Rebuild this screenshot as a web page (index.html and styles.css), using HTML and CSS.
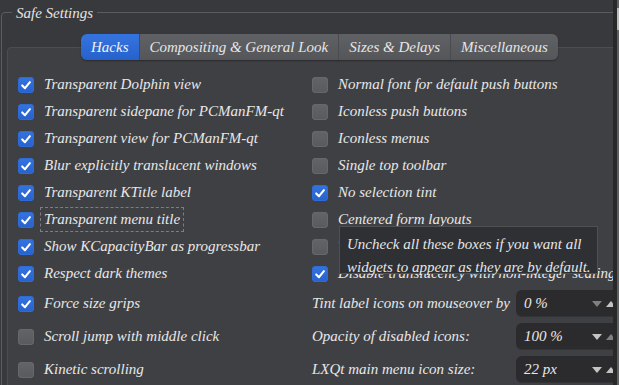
FILE: index.html
```html
<!DOCTYPE html>
<html>
<head>
<meta charset="utf-8">
<link rel="stylesheet" href="styles.css">
</head>
<body>
<div class="screen">
  <div class="window">
    <fieldset class="group">
      <legend>Safe Settings</legend>
      <div class="pane">
        <div class="tabs">
          <span class="tab active">Hacks</span>
          <span class="tab">Compositing &amp; General Look</span>
          <span class="tab">Sizes &amp; Delays</span>
          <span class="tab last">Miscellaneous</span>
        </div>
        <div class="checks">
          <div class="opt"><span class="box on"><svg viewBox="0 0 16 16"><path d="M4.2 8.4 L7 11.2 L11.9 5.2"/></svg></span><span>Transparent Dolphin view</span></div>
          <div class="opt"><span class="box"></span><span>Normal font for default push buttons</span></div>
          <div class="opt"><span class="box on"><svg viewBox="0 0 16 16"><path d="M4.2 8.4 L7 11.2 L11.9 5.2"/></svg></span><span>Transparent sidepane for PCManFM-qt</span></div>
          <div class="opt"><span class="box"></span><span>Iconless push buttons</span></div>
          <div class="opt"><span class="box on"><svg viewBox="0 0 16 16"><path d="M4.2 8.4 L7 11.2 L11.9 5.2"/></svg></span><span>Transparent view for PCManFM-qt</span></div>
          <div class="opt"><span class="box"></span><span>Iconless menus</span></div>
          <div class="opt"><span class="box on"><svg viewBox="0 0 16 16"><path d="M4.2 8.4 L7 11.2 L11.9 5.2"/></svg></span><span>Blur explicitly translucent windows</span></div>
          <div class="opt"><span class="box"></span><span>Single top toolbar</span></div>
          <div class="opt"><span class="box on"><svg viewBox="0 0 16 16"><path d="M4.2 8.4 L7 11.2 L11.9 5.2"/></svg></span><span>Transparent KTitle label</span></div>
          <div class="opt"><span class="box on"><svg viewBox="0 0 16 16"><path d="M4.2 8.4 L7 11.2 L11.9 5.2"/></svg></span><span>No selection tint</span></div>
          <div class="opt"><span class="box on"><svg viewBox="0 0 16 16"><path d="M4.2 8.4 L7 11.2 L11.9 5.2"/></svg></span><span class="focus">Transparent menu title</span></div>
          <div class="opt"><span class="box"></span><span>Centered form layouts</span></div>
          <div class="opt"><span class="box on"><svg viewBox="0 0 16 16"><path d="M4.2 8.4 L7 11.2 L11.9 5.2"/></svg></span><span>Show KCapacityBar as progressbar</span></div>
          <div class="opt"><span class="box"></span><span>Transparent PCManFM-qt desktop</span></div>
          <div class="opt"><span class="box on"><svg viewBox="0 0 16 16"><path d="M4.2 8.4 L7 11.2 L11.9 5.2"/></svg></span><span>Respect dark themes</span></div>
          <div class="opt"><span class="box on"><svg viewBox="0 0 16 16"><path d="M4.2 8.4 L7 11.2 L11.9 5.2"/></svg></span><span>Disable translucency with non-integer scaling</span></div>
        </div>
        <div class="bottom">
          <div class="opt"><span class="box on"><svg viewBox="0 0 16 16"><path d="M4.2 8.4 L7 11.2 L11.9 5.2"/></svg></span><span>Force size grips</span></div>
          <div class="field"><span>Tint label icons on mouseover by</span><div class="spin"><span class="val">0 %</span><span class="arr down dim"></span><span class="arr up"></span></div></div>
          <div class="opt"><span class="box"></span><span>Scroll jump with middle click</span></div>
          <div class="field"><span>Opacity of disabled icons:</span><div class="spin"><span class="val">100 %</span><span class="arr down"></span><span class="arr up dim"></span></div></div>
          <div class="opt"><span class="box"></span><span>Kinetic scrolling</span></div>
          <div class="field"><span>LXQt main menu icon size:</span><div class="spin"><span class="val">22 px</span><span class="arr down"></span><span class="arr up"></span></div></div>
        </div>
      </div>
    </fieldset>
  </div>
  <div class="edge"></div>
  <div class="scroll"><div class="thumb"></div></div>
</div>
<div class="tooltip">Uncheck all these boxes if you want all<br>widgets to appear as they are by default.</div>
</body>
</html>
```

FILE: styles.css
```css
html, body {
  margin: 0;
  padding: 0;
  background: #38393d;
  width: 619px;
  height: 385px;
  overflow: hidden;
  font-family: "Liberation Serif", "Times New Roman", serif;
  font-style: italic;
  font-size: 15px;
  color: #e8e8e8;
}

.screen {
  display: flex;
  height: 385px;
}

.window {
  width: 613px;
  height: 385px;
  overflow: hidden;
  flex: none;
}

.edge {
  width: 4px;
  background: #29292a;
  flex: none;
}

.scroll {
  width: 2px;
  background: #5f6063;
  flex: none;
  padding-top: 8px;
}

.thumb {
  height: 22px;
  background: #b9babc;
}

.group {
  margin: 0 0 0 1px;
  padding: 0;
  width: 700px;
  height: 420px;
  border: 1px solid #5b5c60;
  border-radius: 4px;
  box-sizing: border-box;
}

.group legend {
  margin-left: 10px;
  padding: 0 4px;
  font-size: 15px;
  line-height: 22px;
  padding-top: 2px;
  color: #e4e4e4;
}

.pane {
  margin: 23px 0 0 5px;
  border: 1px solid #4c4d51;
  border-radius: 4px;
  background: #3f4044;
  height: 400px;
}

.tabs {
  display: flex;
  margin: -14px 0 0 73px;
  height: 26px;
  width: max-content;
  border-radius: 6px;
  box-shadow: 0 1px 2px rgba(0,0,0,0.35);
}

.tab {
  display: flex;
  align-items: center;
  padding: 0 10px;
  background: linear-gradient(#606164, #55565a);
  border-left: 1px solid #4a4b4e;
  color: #e6e6e6;
  font-size: 15px;
}

.tab.active {
  background: linear-gradient(#3574e0, #2661cb);
  border-left: none;
  border-radius: 6px 0 0 6px;
  color: #f2f2f2;
}

.tab.last {
  border-radius: 0 6px 6px 0;
}

.checks {
  display: grid;
  grid-template-columns: 294px 1fr;
  grid-auto-rows: 27px;
  margin: 11px 0 0 10px;
}

.opt {
  display: flex;
  align-items: center;
  white-space: nowrap;
}

.box {
  width: 16px;
  height: 16px;
  border-radius: 4px;
  background: linear-gradient(#636467, #595a5d);
  box-shadow: inset 0 0 0 1px #67686b;
  margin-right: 10px;
  flex: none;
  display: flex;
}

.box.on {
  background: linear-gradient(#3574e0, #2761cc);
  box-shadow: inset 0 0 0 1px #2f6bd6;
}

.box svg {
  width: 16px;
  height: 16px;
}

.box path {
  fill: none;
  stroke: #ffffff;
  stroke-width: 2.1;
  stroke-linecap: round;
  stroke-linejoin: round;
}

.focus {
  outline: 1px dashed #7d7e82;
  outline-offset: 3px;
}

.bottom {
  display: grid;
  grid-template-columns: 294px 1fr;
  grid-auto-rows: 27px;
  row-gap: 6px;
  margin: 3px 0 0 10px;
}

.field {
  display: grid;
  grid-template-columns: 204px 110px;
  align-items: center;
  white-space: nowrap;
}

.spin {
  height: 27px;
  background: #2b2b2e;
  border-radius: 6px;
  display: flex;
  align-items: center;
  padding-left: 8px;
  box-shadow: inset 0 -1px 0 #333438;
}

.val {
  width: 68px;
}

.arr {
  width: 0;
  height: 0;
  border-left: 5px solid transparent;
  border-right: 5px solid transparent;
  margin-right: 4px;
}

.arr.down {
  border-top: 6px solid #c4c4c4;
}

.arr.up {
  border-bottom: 6px solid #c4c4c4;
}

.arr.down.dim {
  border-top-color: #808083;
}

.arr.up.dim {
  border-bottom-color: #808083;
}

.tooltip {
  position: absolute;
  left: 339px;
  top: 226px;
  width: 243px;
  height: 34px;
  padding: 6px 7px 6px 7px;
  background: #2f3034;
  border: 1px solid #4f5054;
  line-height: 23px;
  font-size: 15px;
  color: #e6e6e6;
  white-space: nowrap;
}
```
